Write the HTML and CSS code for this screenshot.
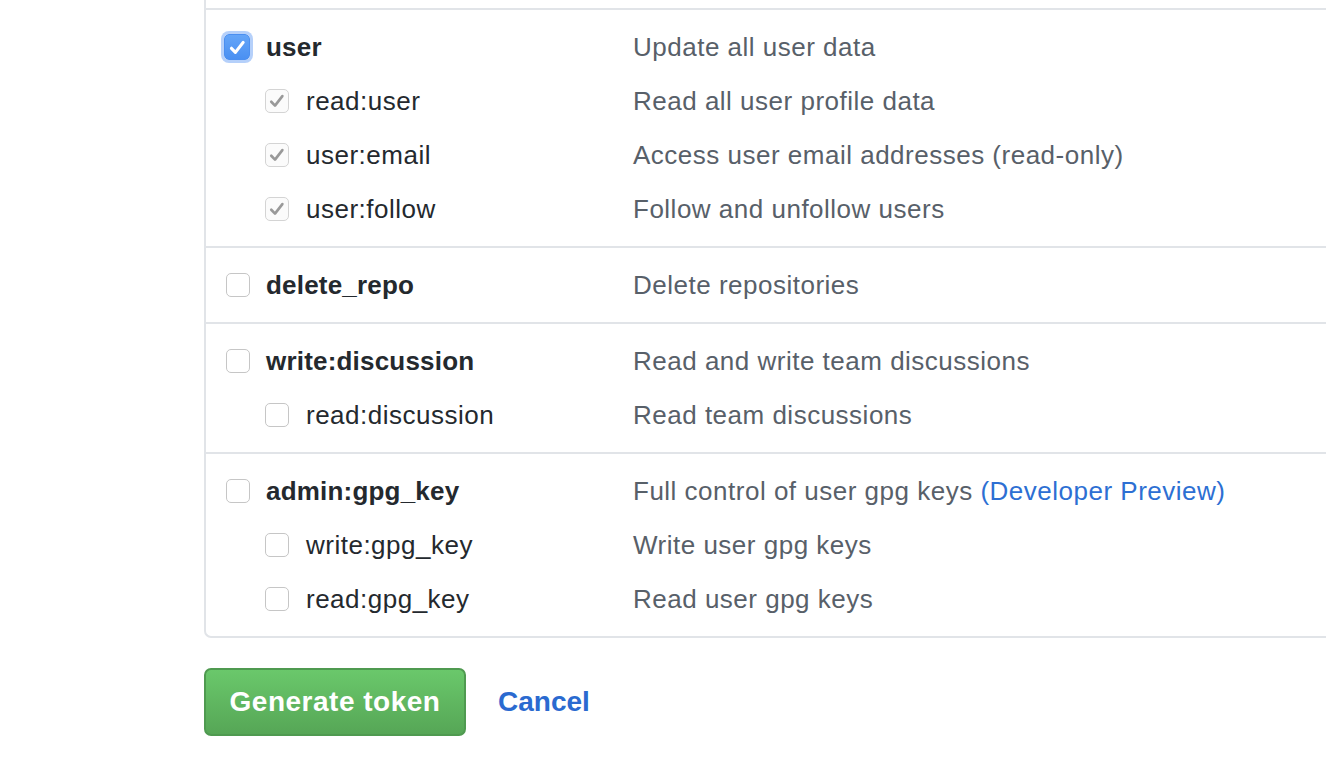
FILE: index.html
```html
<!DOCTYPE html>
<html>
<head>
<meta charset="utf-8">
<link rel="stylesheet" href="styles.css">
</head>
<body>
<div class="page">
  <div class="scopes">
    <div class="group">
      <div class="row">
        <label class="scope parent"><span class="cb cb-focus"><svg viewBox="0 0 16 16"><path d="M3.4 8.6l3 3.1 5.9-7.6" /></svg></span><span class="name">user</span></label>
        <div class="desc">Update all user data</div>
      </div>
      <div class="row">
        <label class="scope child"><span class="cb cb-dis"><svg viewBox="0 0 16 16"><path d="M3.4 8.6l3 3.1 5.9-7.6" /></svg></span><span class="name">read:user</span></label>
        <div class="desc">Read all user profile data</div>
      </div>
      <div class="row">
        <label class="scope child"><span class="cb cb-dis"><svg viewBox="0 0 16 16"><path d="M3.4 8.6l3 3.1 5.9-7.6" /></svg></span><span class="name">user:email</span></label>
        <div class="desc">Access user email addresses (read-only)</div>
      </div>
      <div class="row">
        <label class="scope child"><span class="cb cb-dis"><svg viewBox="0 0 16 16"><path d="M3.4 8.6l3 3.1 5.9-7.6" /></svg></span><span class="name">user:follow</span></label>
        <div class="desc">Follow and unfollow users</div>
      </div>
    </div>
    <div class="group">
      <div class="row">
        <label class="scope parent"><span class="cb"></span><span class="name">delete_repo</span></label>
        <div class="desc">Delete repositories</div>
      </div>
    </div>
    <div class="group">
      <div class="row">
        <label class="scope parent"><span class="cb"></span><span class="name">write:discussion</span></label>
        <div class="desc">Read and write team discussions</div>
      </div>
      <div class="row">
        <label class="scope child"><span class="cb"></span><span class="name">read:discussion</span></label>
        <div class="desc">Read team discussions</div>
      </div>
    </div>
    <div class="group">
      <div class="row">
        <label class="scope parent"><span class="cb"></span><span class="name">admin:gpg_key</span></label>
        <div class="desc">Full control of user gpg keys <a class="preview" href="#">(Developer Preview)</a></div>
      </div>
      <div class="row">
        <label class="scope child"><span class="cb"></span><span class="name">write:gpg_key</span></label>
        <div class="desc">Write user gpg keys</div>
      </div>
      <div class="row">
        <label class="scope child"><span class="cb"></span><span class="name">read:gpg_key</span></label>
        <div class="desc">Read user gpg keys</div>
      </div>
    </div>
  </div>
  <div class="actions">
    <button class="btn-primary">Generate token</button>
    <a class="cancel" href="#">Cancel</a>
  </div>
</div>
</body>
</html>
```

FILE: styles.css
```css
html, body {
  margin: 0;
  padding: 0;
  background: #fff;
  overflow: hidden;
}
body {
  font-family: "Liberation Sans", Arial, sans-serif;
  color: #24292e;
}
.page {
  padding-left: 204px;
}
.scopes {
  box-sizing: border-box;
  width: calc(100vw - 204px);
  padding-top: 8px;
  border-left: 2px solid #e1e4e8;
  border-bottom: 2px solid #e1e4e8;
  border-bottom-left-radius: 7px;
}
.group {
  border-top: 2px solid #e1e4e8;
  padding: 10px 0;
}
.row {
  display: grid;
  grid-template-columns: 427px 1fr;
  align-items: center;
  height: 54px;
}
.scope {
  display: flex;
  align-items: center;
  font-size: 26px;
  letter-spacing: 0.5px;
}
.scope.parent {
  padding-left: 20px;
  gap: 16px;
}
.scope.parent .name {
  font-weight: bold;
  letter-spacing: 0.2px;
}
.scope.child {
  padding-left: 59px;
  gap: 17px;
}
.cb {
  box-sizing: border-box;
  width: 24px;
  height: 24px;
  border: 1.5px solid #c6c6c6;
  border-radius: 5px;
  background: #fff;
  display: flex;
  align-items: center;
  justify-content: center;
  flex: none;
}
.cb svg {
  width: 20px;
  height: 20px;
  fill: none;
  stroke-width: 2;
  stroke-linecap: round;
  stroke-linejoin: round;
}
.cb-dis {
  background: #fbfbfb;
  border-color: #d4d4d4;
}
.cb-dis svg {
  stroke: #999;
  stroke-width: 2.1;
}
.cb-focus {
  width: 26px;
  height: 26px;
  margin-left: -2px;
  border: 1.5px solid #4b8ff0;
  background: linear-gradient(#64a5f8, #4a90f2);
  box-shadow: 0 0 0 3px rgba(120, 170, 245, 0.55);
}
.cb-focus svg {
  width: 21px;
  height: 21px;
  stroke: #fff;
  stroke-width: 2.4;
}
.desc {
  font-size: 26px;
  letter-spacing: 0.5px;
  color: #586069;
  white-space: nowrap;
}
.preview {
  color: #2d6fd3;
  text-decoration: none;
}
.actions {
  display: flex;
  align-items: center;
  gap: 32px;
  margin-top: 30px;
}
.btn-primary {
  font-family: "Liberation Sans", Arial, sans-serif;
  font-size: 28px;
  font-weight: bold;
  letter-spacing: 0.5px;
  color: #fff;
  height: 68px;
  width: 262px;
  padding: 0;
  border: 2px solid #4f9a50;
  border-radius: 7px;
  background: linear-gradient(#6ac86b, #56a656);
  cursor: pointer;
}
.cancel {
  font-size: 28px;
  font-weight: bold;
  color: #2a6ad0;
  text-decoration: none;
}
```
